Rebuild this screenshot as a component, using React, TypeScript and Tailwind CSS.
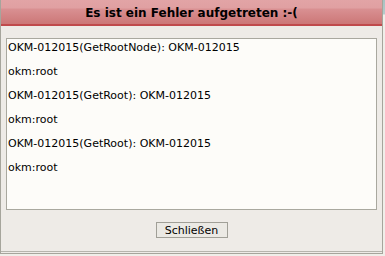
export default function App() {
  const lines = [
    'OKM-012015(GetRootNode): OKM-012015',
    'okm:root',
    'OKM-012015(GetRoot): OKM-012015',
    'okm:root',
    'OKM-012015(GetRoot): OKM-012015',
    'okm:root',
  ]

  return (
    <div
      className="w-[385px] h-[256px] bg-[linear-gradient(to_bottom,#a9c2c2_0px,#b4caca_14px,#f0eee9_15px)] overflow-hidden"
      style={{ fontFamily: '"DejaVu Sans", Verdana, sans-serif' }}
    >
      <div className="w-[383px] h-[254px] flex flex-col bg-[#eeebe7] border-r border-b border-l border-[#a6a59c]">
        {/* Title bar */}
        <div className="h-[26px] shrink-0 flex items-center justify-center bg-[linear-gradient(to_bottom,#e2a4a6_0px,#e0a0a2_8px,#d99092_9px,#cc7777_24px)] border-b-2 border-[#c04a4c]">
          <span className="text-[12px] font-bold text-black leading-none pt-[2px]">Es ist ein Fehler aufgetreten :-(</span>
        </div>

        <div className="flex-1 flex flex-col border-b border-[#b6b5ad] mb-px">
          {/* Message box */}
          <div className="px-[5px] pt-[12px]">
            <div className="h-[172px] bg-[#fdfcf9] border border-[#a9a89f] pl-[1px] pt-[3px] overflow-hidden">
              {lines.map((line, i) => (
                <div key={i} className="text-[11px] leading-[12px] h-[24px] text-black whitespace-nowrap">
                  {line}
                </div>
              ))}
            </div>
          </div>

          {/* Close button */}
          <div className="flex justify-center pt-[12px]">
            <button className="w-[72px] h-[16px] bg-[#ebe9e4] border border-[#a09f97] text-[11px] leading-none text-black flex items-center justify-center">
              Schließen
            </button>
          </div>
        </div>
      </div>
    </div>
  )
}
